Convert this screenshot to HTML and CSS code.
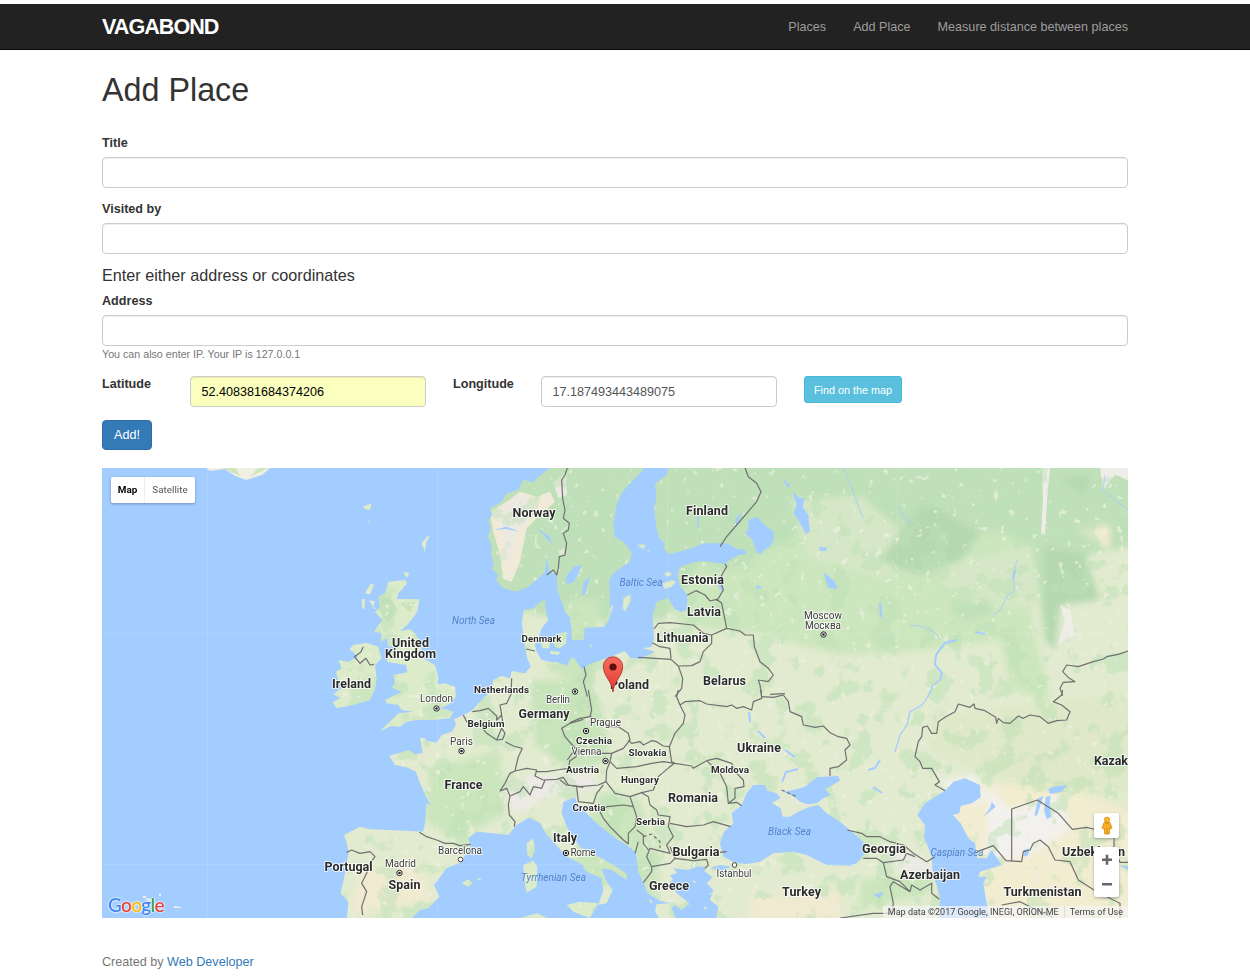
FILE: index.html
```html
<!DOCTYPE html>
<html lang="en">
<head>
<meta charset="utf-8">
<title>Vagabond - Add Place</title>
<link rel="stylesheet" href="styles.css">
</head>
<body>
<header class="navbar">
  <div class="container navbar-inner">
    <a class="brand" href="#">VAGABOND</a>
    <nav class="nav">
      <a href="#">Places</a>
      <a href="#">Add Place</a>
      <a href="#">Measure distance between places</a>
    </nav>
  </div>
</header>
<main class="container">
  <h1>Add Place</h1>
  <form>
    <div class="group">
      <label for="title">Title</label>
      <input class="control" id="title" type="text">
    </div>
    <div class="group">
      <label for="visited">Visited by</label>
      <input class="control" id="visited" type="text">
    </div>
    <h4>Enter either address or coordinates</h4>
    <div class="group address">
      <label for="address">Address</label>
      <input class="control" id="address" type="text">
      <span class="help">You can also enter IP. Your IP is 127.0.0.1</span>
    </div>
    <div class="coords">
      <label for="lat">Latitude</label>
      <input class="control autofilled" id="lat" type="text" value="52.408381684374206">
      <label for="lng">Longitude</label>
      <input class="control" id="lng" type="text" value="17.187493443489075">
      <button type="button" class="btn btn-info">Find on the map</button>
    </div>
    <button type="button" class="btn btn-primary">Add!</button>
  </form>
  <div class="map">
    <svg class="map-canvas" viewBox="102 468 1026 450" width="1026" height="450">
      <defs>
        <filter id="terrain" filterUnits="userSpaceOnUse" x="90" y="450" width="1060" height="480" color-interpolation-filters="sRGB">
          <feTurbulence type="fractalNoise" baseFrequency=".04" numOctaves="5" seed="4" result="n1"/>
          <feColorMatrix in="n1" values="0 0 0 0 .74  0 0 0 0 .88  0 0 0 0 .71  12 0 0 0 -6.6"/>
          <feColorMatrix values="1 0 0 0 0  0 1 0 0 0  0 0 1 0 0  0 0 0 .5 0" result="green"/>
          <feTurbulence type="fractalNoise" baseFrequency=".12" numOctaves="3" seed="9" result="n2"/>
          <feColorMatrix in="n2" values="0 0 0 0 .93  0 0 0 0 .94  0 0 0 0 .88  14 0 0 0 -9.7"/>
          <feColorMatrix values="1 0 0 0 0  0 1 0 0 0  0 0 1 0 0  0 0 0 .7 0" result="pale"/>
          <feComposite in="green" in2="SourceGraphic" operator="atop" result="a"/>
          <feComposite in="pale" in2="a" operator="atop"/>
        </filter>
        <filter id="soft" x="-20%" y="-20%" width="140%" height="140%"><feGaussianBlur stdDeviation="3"/></filter>
        <linearGradient id="pin" x2="0" y2="1"><stop stop-color="#fc6c60"/><stop offset="1" stop-color="#dd3b30"/></linearGradient>
        <g id="capital"><circle r="2.7" fill="#fff" stroke="#222"/><circle r="1.3" fill="#222"/></g>
      </defs>

      <g filter="url(#terrain)">
        <rect x="90" y="450" width="1060" height="480" fill="#e2ebcf"/>
        <g filter="url(#soft)">
          <path fill="#cce6be" d="M640 540L850 530 1030 450V610L1050 700 1010 690 1000 640 930 650 840 655 760 635 680 625z"/>
          <path fill="#c0e0ba" d="M470 440H1160V540L1090 555 1050 600 1045 640 1030 540 990 530 950 555 880 575 850 540 800 530 735 570 700 560 665 620H560L480 600z"/>
          <path fill="#d5e7c6" d="M790 500L860 495 900 530 890 580 810 560zM930 570L1030 545 1035 610 960 600z"/>
          <path fill="#b5d8b1" d="M880 560L925 500 980 535 960 560 920 575zM1045 545L1085 555 1100 600 1060 605 1055 650 1045 640zM1060 480L1090 475 1085 495z"/>
          <path fill="#c0e0ba" d="M952 607L987 598 992 614 960 622z"/>
          <path fill="#dfe8c8" d="M930 720L1060 700 1150 690V790L1060 800 990 775 930 750z"/>
          <path fill="#f2ecd0" d="M945 780L1070 788 1150 820V930H980L960 850z"/>
          <path fill="#f3f1ed" d="M990 785L1010 810 1060 795 1070 830 1030 855 1010 860 985 858zM940 780L975 775 990 800 965 805z"/>
          <path fill="#cbe5bd" d="M430 770L500 750 505 815 455 840 425 820zM570 870L600 790 640 800 660 880 645 900zM560 600L600 600 590 690 550 670zM860 880L930 875 935 890 860 910z"/>
          <path fill="#edeae6" d="M505 790L530 775 590 775 600 788 560 790 515 815zM880 845L915 855 945 875 900 870z"/>
          <path fill="#c8e4bb" d="M530 680L570 680 600 700 610 760 570 770 535 745z"/>
          <path fill="#f0ead0" d="M360 870L420 860 430 900 350 915zM750 895L840 890 840 920 750 920zM1075 530L1110 525 1110 550z"/>
        </g>
        <g transform="translate(320 465) scale(.33333)">
          <path fill="#f1ead8" d="M510 140L560 110 600 80 650 95 690 80 705 110 650 160 620 190 600 290 575 350 550 340 540 270 520 200z"/>
          <path fill="#ece9e3" d="M520 145L600 85 640 115 625 165 590 200 570 280 545 290 560 210zM700 50L740 20 740 90 715 100z"/>
        </g>
        <path fill="#efede8" d="M1042 468H1050L1047 500 1045 535 1041 535 1043 500zM1055 590L1060 605 1070 610 1075 635 1058 645 1065 620zM1100 468H1128V480L1115 475 1103 490z"/>
      </g>

      <g fill="#a3ccff">
        <rect x="100" y="465" width="222" height="460"/>
        <g transform="translate(320 465) scale(.33333)">
          <path d="M-10 0H700L650 40 640 52 610 45 595 75 560 85 545 110 510 130 517 150 505 165 512 190 503 215 515 240 512 265 522 300 515 310 535 330 528 345 550 370 590 380 625 365 655 340 675 320 680 280 688 318 710 330 712 375 725 410 735 440 752 460 745 490 752 525 790 530V590L755 575 740 602 715 592 690 590 665 585 650 560 645 540 655 520 665 490 685 465 678 440 675 403 655 415 640 430 612 435 605 470 610 510 615 545 622 580 632 605 615 625 590 620 575 618 570 640 545 632 520 645 515 670 498 694H-10z"/>
          <path d="M520 195L560 185 600 200 560 192zM650 190L690 215 697 240 685 225z"/>
        </g>
        <g transform="translate(320 690) scale(.33333)">
          <path d="M-10 0H502L490 25 455 62 430 75 402 88 408 105 395 125 365 135 350 158 320 152 312 143 300 145 308 190 285 192 265 180 235 190 208 197 225 225 260 232 288 245 300 280 318 320 332 345 320 340 315 400 309 425 260 422 200 420 150 418 120 410 72 435 82 465 85 490 75 550 62 610 85 635 80 690H-10z"/>
          <path d="M270 690L300 660 325 655 358 620 342 585 380 535 425 515 452 470 445 445 470 425 520 430 565 435 590 405 625 383 660 398 680 435 700 455 740 500 790 525V690z"/>
        </g>
        <g transform="translate(560 465) scale(.33333)">
          <path d="M330 0L320 30 292 50 285 60 290 95 282 130 290 190 298 220 315 235 310 250 330 268 395 250 430 235 500 235 530 252 550 252 562 267 535 270 505 287 495 297 430 288 400 292 360 305 352 330 358 360 382 390 380 435 362 440 345 432 325 398 290 410 278 450 282 520 275 545 248 550 285 560 240 582 210 578 195 558 160 572 90 597 65 612 45 582 15 565-5 590V425L28 460 35 490V525H70L75 488 135 485 150 430 148 345 160 325 210 290 215 265 195 235 165 215 160 180 170 120 185 85 205 60 245 20 255 0z"/>
          <path d="M565 165L590 155 620 185 640 200 642 222 630 245 610 255 602 267 590 262 578 225 555 205 565 195zM698 82L720 100 735 98 728 125 745 150 750 200 738 207 715 165 700 145 710 120zM18 335L40 305 64 300 58 322 42 350 20 358zM72 350L90 335 75 388 65 390zM478 335L490 330 485 380 475 365zM790 320L825 350 832 372 805 368zM778 245L802 248 798 258 780 257zM590 360L608 368 590 372zM665 40L690 60 685 70zM525 165L545 140 530 185zM412 150H417L415 190 411 188z"/>
        </g>
        <g transform="translate(560 690) scale(.33333)">
          <path d="M-5 690V505L20 500 60 520 80 545 125 565 130 600 115 645 140 640 158 600 140 575 130 550 125 535 155 540 185 560 200 570 200 552 170 530 125 505 60 470 25 420 5 370 10 335 45 322 52 345 75 365 110 400 160 440 200 465 228 488 235 545 250 578 262 610 300 632 330 640 290 642 285 665 302 690z"/>
          <path d="M350 690L335 655 345 645 365 660 388 640 350 610 330 575 340 570 330 555 352 550 340 535 385 540 410 530 436 530 435 545 458 562 440 580 460 600 450 630 475 650 468 690zM450 535L480 525 512 530 490 542z"/>
          <path d="M490 500L480 460 492 425 520 400 515 370 545 345 560 310 580 285 615 285 622 302 650 310 662 325 635 338 662 355 668 380 690 380 715 365 750 350 775 345 800 370 840 395 870 420 910 455 915 490 890 520 870 527 800 525 740 495 700 485 640 490 600 515 560 522 525 518z"/>
          <path d="M670 305L700 300 735 290 770 262 835 258 840 272 795 298 812 315 790 325 770 340 740 343 720 335 705 322z"/>
        </g>
        <g transform="translate(840 690) scale(.33333)">
          <path d="M315 302L340 275 375 265 420 285 422 322 395 340 362 348 358 370 338 375 362 400 385 445 405 460 412 505 440 505 455 480 485 525 420 545 415 562 440 560 430 580 440 640 450 690H298L300 620 278 545 275 500 252 440 255 405 232 375 255 340z"/>
          <path d="M595 325L610 318 592 375 583 378zM618 320L632 318 628 350 635 380 620 388 612 360zM550 480L568 475 565 495 552 500zM640 290L682 285 665 305 630 312 625 298zM455 335L467 350 430 380 450 355zM840 525L870 530 870 545zM100 615L130 605 120 625z"/>
        </g>
      </g>

      <g filter="url(#terrain)">
        <g fill="#dcebc9">
          <g transform="translate(320 465) scale(.33333)">
            <path d="M205 350L255 345 262 355 235 385 230 402 298 403 292 440 262 480 240 498 270 493 288 508 300 530 310 580 345 600 355 640 352 658 375 655 405 665 408 695 385 720 360 730 385 735 400 740 390 760 340 765 290 765 260 770 240 785 215 783 180 798 215 765 235 745 280 740 245 735 235 720 200 715 195 705 245 680 215 668 225 655 220 630 262 622 258 600 200 590 205 570 235 545 205 545 200 520 182 530 185 505 162 500 187 465 165 440 180 430 175 395 195 385z"/>
            <path d="M55 585L85 590 115 575 88 552 100 540 140 533 175 545 185 580 165 600 170 640 165 675 150 705 100 720 50 730 38 712 60 700 40 688 70 665 55 650 48 620 65 610z"/>
            <path d="M135 385L150 358 163 358 150 388zM125 402L135 402 133 432 126 430zM148 405L165 410 160 425 175 435 160 430zM305 235L320 215 330 213 318 235 315 262zM128 125L155 115 150 135 135 132zM142 160L150 175 145 172zM250 320L268 325 260 340z"/>
            <path d="M658 525L690 530 688 550 668 550zM695 520L720 505 740 500 738 535 720 550 705 545zM690 558L720 560 715 570 692 567z"/>
          </g>
          <g transform="translate(320 690) scale(.33333)">
            <path d="M620 460L640 445 645 480 635 505 622 495zM610 525L640 512 652 530 650 590 620 608 612 570zM425 580L445 568 458 580 445 590zM470 565L485 567 478 572zM740 645L780 635 835 640 810 684 760 665zM600 684L650 670 700 690z"/>
          </g>
          <g transform="translate(560 465) scale(.33333)">
            <path d="M308 355L335 345 350 350 335 365 315 372zM312 325L330 320 335 332 320 335zM190 400L210 388 212 405 195 440 188 430zM135 472L155 420 160 423 142 475zM85 538L98 540 95 548zM230 240L255 238 252 252zM262 252L270 255 265 262z"/>
          </g>
          <g transform="translate(560 690) scale(.33333)"><path d="M350 640L375 640 400 650 380 645zM395 570L410 575 405 580zM445 610L465 608 460 615zM268 625L280 640 270 638zM430 650L440 652 438 662z"/></g>
        </g>
        <path fill="#c6e3ba" d="M380 595L392 600 398 610 388 622 380 612zM400 603L415 602 410 612z"/>
      </g>
      <g fill="#efefe4">
        <path d="M206 468H270L262 475 246 480 235 476 225 469 210 471z"/>
        <path fill="#cfe5c0" d="M222 468L236 468 240 476zM250 477L268 468 258 468z"/>
        <path d="M143 896H146V898H143zM159 894H161V896H159zM174 906L181 907V908H174zM145 898L152 899V901H148z"/>
      </g>

      <g class="streams">
        <path d="M863 518L843 465M898 507L903 517 915 526M1017 560L1013 575 1015 590 1008 595 1000 610 993 615M1105 475L1103 490 1115 500 1128 510M910 625L920 626 935 632 940 640"/>
        <path class="wide" d="M880 603L881 617M957 640L945 643 936 655 935 665 942 673 940 680M1015 570L1013 580M975 632L985 634M880 760L875 768 868 770M798 769L786 772 782 782M749 712L750 722M758 731L765 738M873 787L882 793M785 750L795 757"/>
        <path class="mid" d="M940 680L933 685 929 695 922 705 910 712 907 725 900 735 895 752"/>
      </g>
      <g class="graticule"><path d="M207.500 468V918M437.500 468V918M667.500 468V918M897.500 468V918M102 633.500H1128M102 864.500H1128"/></g>

      <g class="borders">
        <g transform="translate(320 465) scale(.33333)">
          <path d="M742 9L735 30 725 45 728 100 735 135 730 160 748 175 745 195 730 205 740 235 735 270 718 275 715 310 710 330 700 315 680 330M130 545L122 562 103 575 120 595 138 580 150 600 162 598M618 552L645 558M575 640L573 690"/>
        </g>
        <g transform="translate(560 465) scale(.33333)">
          <path d="M555 9L565 35 590 55 603 80 590 110 560 145 530 180 500 215 480 245M495 297L500 305 485 330 482 350 490 375 475 400 470 408M382 390L408 377 435 390 450 408 470 403 485 415 492 450 500 490M282 492L295 475 330 473 400 480 430 505 455 510 500 490 540 498 555 510 580 510 583 545 600 590 625 610 640 630 625 650 595 645 600 660 605 695M276 533L300 545 330 550 333 580M455 510L455 535 430 560 420 590 395 602 355 603 333 583 235 577M355 603L368 640 365 670 345 695M72 605L78 630 70 650 82 695M630 688L675 686"/>
        </g>
        <g transform="translate(840 465) scale(.33333)"><path d="M870 556L835 568 800 575 790 582 760 590 715 605 680 600 668 620 688 640 705 650 670 652 660 670 668 692"/></g>
        <g transform="translate(320 690) scale(.33333)">
          <path d="M572 15L560 40 540 45 545 75 530 90 530 78 505 55 480 62 457 65M430 75L440 95 480 105 500 130 530 150 548 148 555 130 545 115 530 150M545 75L550 110M555 155L580 168 607 175 595 200 585 243 570 250 555 280 540 303 560 295 570 318 565 345 568 375 585 395 583 410M585 243L620 235 650 240 645 258 670 270 710 268 730 262 745 285 790 292M650 245L680 245 710 240 745 235 750 210M570 318L600 305 610 290 630 315 640 290 665 295 675 270M790 88L750 100 725 115 735 140 770 180 768 200 750 212M298 427L320 440 350 450 375 460 400 460 420 467 452 463M80 487L95 480 120 490 150 485 165 500 150 520 140 550 125 580 140 605 125 650 128 675"/>
        </g>
        <g transform="translate(560 690) scale(.33333)">
          <path d="M85 0L95 60 90 80 60 85 30 98M90 80L125 95 150 110 175 110 205 130 210 150 190 175 155 190 120 190 80 185 40 185 22 210M205 150L215 160 240 155 250 165 275 152 290 155 310 168 328 170 335 215 345 220 310 215 275 220 230 230 170 235 150 215 155 190M150 215L140 240 138 275 115 285 60 290 20 285 0 270M138 275L165 310 210 320 245 308 280 300 295 260 330 230 345 218M328 170L345 130 370 100 375 75 360 45 350 20 355 0M360 45L375 35 420 32 440 42 500 50 515 45 530 55 550 50 575 60 580 35 605 25 603 0M605 20L640 22 670 15 685 35 690 65 725 80 730 105 765 112 790 108 810 128 835 140 860 145 870 165 855 180 860 210 835 230 810 235 810 258M345 220L395 228 400 235 440 212 470 205 515 220 530 250 550 270 552 290 525 295 525 325 505 340 530 337 545 347M440 212L480 250 500 290 505 340M330 400L380 410 430 405 460 395 512 410M245 308L265 320 270 345 290 360 295 375 330 380 325 410 340 440 320 465 330 490 270 475 260 500 275 530 275 545 250 578M50 290L55 335 100 340 110 310 130 285M210 320L220 350 190 345 140 350 120 365 130 385 150 410 190 450 205 462M220 350L230 380 225 410 205 430 205 462M230 420L250 435 250 460 265 480M235 455L225 490M330 470L345 505 400 512 440 508 445 525 435 535M345 505L330 520 275 530M480 487L500 485"/>
          <path stroke-dasharray="10 8" d="M250 440L275 432 300 455 300 475M665 300L710 320"/>
        </g>
        <g transform="translate(840 690) scale(.33333)">
          <path d="M668 0L665 15 640 35 665 45 690 65 680 90 650 92 625 100 600 80 570 75 550 85 535 78 510 100 490 98 475 85 470 100 467 82 435 62 405 55 402 42 390 52 355 42 345 65 315 82 295 95 290 130 275 130 262 108 248 112 245 140 235 155 225 200 240 215 248 235 275 235 298 275 285 285 315 302M515 512V357L592 330 655 370 697 418 740 412 770 420M822 445V475L840 517H870M412 485L460 467 498 512 545 515 550 485 570 480 580 460 600 450 625 470 645 510 690 515 715 570 770 605 840 640V684M22 420L65 430 80 440 120 440 150 455 190 465 220 490 260 515 285 500M70 505L110 505 130 518 190 510 200 490 225 500M130 518L140 560 180 575 210 605 215 585 240 600 275 580 275 610 298 628M210 605L160 575 150 590 160 640 155 670 100 670 0 684M485 645L540 635 590 660 640 684"/>
        </g>
      </g>

      <g class="country">
        <text x="534" y="517" textLength="43">Norway</text><text x="707" y="515" textLength="42">Finland</text>
        <text x="702.500" y="583.500" textLength="43">Estonia</text><text x="704" y="615.500" textLength="34">Latvia</text>
        <text x="682.500" y="642" textLength="52">Lithuania</text><text x="724.500" y="684.500" textLength="43">Belarus</text>
        <text x="629.500" y="689" textLength="39">Poland</text><text x="759" y="752" textLength="44">Ukraine</text>
        <text x="693" y="802" textLength="50">Romania</text><text x="696" y="856" textLength="47">Bulgaria</text>
        <text x="669" y="890" textLength="40">Greece</text><text x="801.500" y="896" textLength="39">Turkey</text>
        <text x="544" y="718" textLength="51">Germany</text><text x="463.500" y="789" textLength="38">France</text>
        <text x="404.500" y="889" textLength="32">Spain</text><text x="348.500" y="871" textLength="48">Portugal</text>
        <text x="351.500" y="688" textLength="39">Ireland</text><text x="410.500" y="646.500" textLength="37">United</text>
        <text x="410.500" y="658" textLength="51">Kingdom</text><text x="565" y="841.500" textLength="24">Italy</text>
        <text x="884" y="853" textLength="44">Georgia</text><text x="930" y="878.500" textLength="60">Azerbaijan</text>
        <text x="1042.500" y="896" textLength="78">Turkmenistan</text><text x="1093.500" y="856" textLength="63">Uzbekistan</text>
        <text x="1111" y="765" textLength="34">Kazak</text>
      </g>
      <g class="country small">
        <text x="541.500" y="641.500" textLength="40">Denmark</text><text x="501.500" y="693" textLength="55">Netherlands</text>
        <text x="486" y="727" textLength="37">Belgium</text><text x="594" y="743.500" textLength="36">Czechia</text>
        <text x="582.500" y="773" textLength="33">Austria</text><text x="647.500" y="756" textLength="38">Slovakia</text>
        <text x="640" y="782.500" textLength="38">Hungary</text><text x="589" y="810.500" textLength="33">Croatia</text>
        <text x="650.500" y="824.500" textLength="29">Serbia</text><text x="730" y="773" textLength="38">Moldova</text>
      </g>
      <g class="city">
        <text x="436.500" y="702" textLength="33">London</text><text x="461.500" y="744.500" textLength="23">Paris</text>
        <text x="558" y="702.500" textLength="24">Berlin</text><text x="605.500" y="725.500" textLength="31">Prague</text>
        <text x="586.500" y="754.500" textLength="30">Vienna</text><text x="583" y="856" textLength="25">Rome</text>
        <text x="400.500" y="867" textLength="31">Madrid</text><text x="460" y="853.500" textLength="44">Barcelona</text>
        <text x="734" y="876.500" textLength="35">Istanbul</text><text x="823" y="619" textLength="38">Moscow</text>
        <text x="823" y="629" textLength="36">Москва</text>
      </g>
      <g class="sea">
        <text x="473.500" y="623.500" textLength="43">North Sea</text><text x="641" y="585.500" textLength="43">Baltic Sea</text>
        <text x="553.500" y="881" textLength="65">Tyrrhenian Sea</text><text x="789.500" y="835" textLength="43">Black Sea</text>
        <text x="957" y="856" textLength="53">Caspian Sea</text>
      </g>
      <use href="#capital" x="436.500" y="708.500"/><use href="#capital" x="461.500" y="751"/>
      <use href="#capital" x="575" y="691.500"/><use href="#capital" x="586" y="731"/>
      <use href="#capital" x="605.500" y="761"/><use href="#capital" x="566" y="853"/>
      <use href="#capital" x="399.500" y="873"/><use href="#capital" x="823.500" y="634.500"/>
      <g fill="#fff" stroke="#444"><circle cx="460.500" cy="859.500" r="2.300"/><circle cx="734.500" cy="865" r="2.300"/></g>
      <g>
        <path fill="url(#pin)" stroke="#a8281f" stroke-width=".8" d="M613 692C612.500 682 603.300 676 603.300 666.500A9.700 9.700 0 0 1 622.700 666.500C622.700 676 613.500 682 613 692z"/>
        <circle cx="613" cy="667" r="3.600" fill="#5b120f"/>
      </g>
    </svg>
    <div class="map-types"><span class="active">Map</span><span>Satellite</span></div>
    <div class="logo"><span class="b">G</span><span class="r">o</span><span class="y">o</span><span class="b">g</span><span class="g">l</span><span class="r">e</span></div>
    <div class="tools">
      <button type="button" class="tool pegman" aria-label="Street View">
        <svg width="12" height="20" viewBox="0 0 12 20"><path fill="#f9b021" stroke="#c98518" stroke-width=".7" d="M3 6.500Q6 5.300 9 6.500L11 12 9.500 13 8.700 12 8.300 18H3.700L3.300 12 2.500 13 1 12z"/><path stroke="#c98518" stroke-width=".7" d="M6 12V18"/><path fill="#e88c1a" d="M4 6.500H8L6 8.700z"/><circle cx="6" cy="3.800" r="2.700" fill="#fbb62b" stroke="#c98518" stroke-width=".6"/></svg>
      </button>
      <div class="tool zoom">
        <svg width="25" height="50" viewBox="0 0 25 50"><path stroke="#666" stroke-width="2.600" d="M8 12.700H18M13 7.700V17.700M8 37.300H18"/></svg>
      </div>
    </div>
    <div class="credits"><span>Map data ©2017 Google, INEGI, ORION-ME</span><span>Terms of Use</span></div>
  </div>
</main>
<footer class="container footer">Created by <a href="#">Web Developer</a></footer>
</body>
</html>
```
FILE: styles.css
```css
* { box-sizing: border-box; }
body {
  margin: 0;
  padding-top: 4px;
  background: #fff;
  color: #333;
  font: 12.6px/18px "Liberation Sans", Arial, sans-serif;
}
a { color: #337ab7; text-decoration: none; }
.container { width: 1026px; margin-left: 102px; }
.navbar { height: 46px; background: #222; border-bottom: 1px solid #080808; }
.navbar-inner { height: 45px; display: flex; justify-content: space-between; align-items: center; }
.brand { color: #fff; font-size: 21.6px; font-weight: bold; letter-spacing: -1px; }
.nav { display: flex; gap: 27px; }
.nav a { color: #9d9d9d; }
h1 { margin: 22px 0 26px; font-size: 32.3px; line-height: 36px; font-weight: 400; }
h4 { margin: 12px 0 8px; font-size: 16.2px; line-height: 18px; font-weight: 400; }
.group { margin-bottom: 12px; }
label { display: block; font-weight: bold; }
.group label { margin-bottom: 5px; }
.control {
  display: block;
  width: 100%;
  height: 31px;
  padding: 5px 10.5px;
  border: 1px solid #ccc;
  border-radius: 4px;
  background: #fff;
  box-shadow: inset 0 1px 1px rgba(0, 0, 0, .075);
  color: #555;
  font: inherit;
}
.autofilled { background: #faffbd; color: #000; }
.help { display: block; height: 16px; color: #777; font-size: 10.7px; line-height: 16px; }
.address { margin-bottom: 14px; }
.coords { display: grid; grid-template-columns: 88px 263px 88px 263px auto; justify-content: start; align-items: start; }
.coords label { margin-top: -1px; }
.coords .control { width: 236px; }
.btn { display: block; border: 1px solid; color: #fff; font: inherit; text-align: center; padding: 0; }
.btn-info { width: 98px; height: 27px; background: #5bc0de; border-color: #46b8da; border-radius: 3px; font-size: 10.8px; }
.btn-primary { width: 50px; height: 30px; margin-top: 13px; background: #337ab7; border-color: #2e6da4; border-radius: 4px; }
.map { position: relative; height: 450px; margin-top: 18px; overflow: hidden; font-family: Roboto, sans-serif; }
.map-canvas { display: block; }
.borders { fill: none; stroke: #707070; stroke-width: 3.6; stroke-linejoin: round; }
.streams { fill: none; stroke: #a3ccff; stroke-width: .8; }
.streams .wide { stroke-width: 2; }
.streams .mid { stroke-width: 1.3; }
.graticule { stroke: #fff; stroke-opacity: .13; }
.country, .city, .sea { font-family: Roboto, sans-serif; text-anchor: middle; paint-order: stroke; stroke-linejoin: round; }
.country { font-size: 12.5px; font-weight: 700; fill: #2b2b2b; stroke: rgba(255, 255, 255, .75); stroke-width: 2px; }
.small { font-size: 9.9px; }
.city { font-size: 10px; fill: #3c3c3c; stroke: rgba(255, 255, 255, .8); stroke-width: 2px; }
.sea { font-size: 10px; font-style: italic; fill: #5484c9; }
.map-types {
  position: absolute;
  left: 9px;
  top: 9px;
  display: flex;
  height: 26px;
  border-radius: 2px;
  background: #fff;
  box-shadow: 0 1px 3px rgba(0, 0, 0, .3);
  color: #565656;
  font-size: 9.9px;
  line-height: 26px;
}
.map-types span { width: 50px; text-align: center; }
.map-types .active { width: 34px; border-right: 1px solid #eee; color: #000; font-weight: 700; }
.logo {
  position: absolute;
  left: 6px;
  top: 426px;
  font: 600 19px/22px Lato, sans-serif;
  letter-spacing: -.7px;
  text-shadow: 0 0 1px #fff, 0 0 2px #fff, 0 0 2px #fff;
}
.logo .b { color: #4285f4; }
.logo .r { color: #ea4335; }
.logo .y { color: #fbbc05; }
.logo .g { color: #34a853; }
.tools { position: absolute; right: 9px; top: 345px; display: grid; gap: 9px; }
.tool { width: 25px; border: 0; padding: 0; border-radius: 2px; background: #fff; box-shadow: 0 1px 3px rgba(0, 0, 0, .3); }
.pegman { height: 25px; display: grid; place-items: center; }
.zoom { height: 50px; }
.credits {
  position: absolute;
  right: 0;
  bottom: 0;
  display: flex;
  height: 12px;
  background: rgba(245, 245, 245, .7);
  color: #444;
  font-size: 9px;
  line-height: 12px;
  white-space: nowrap;
}
.credits span { padding: 0 5px; }
.credits span + span { border-left: 1px solid #ddd; }
.footer { margin-top: 35px; color: #777; }
```
